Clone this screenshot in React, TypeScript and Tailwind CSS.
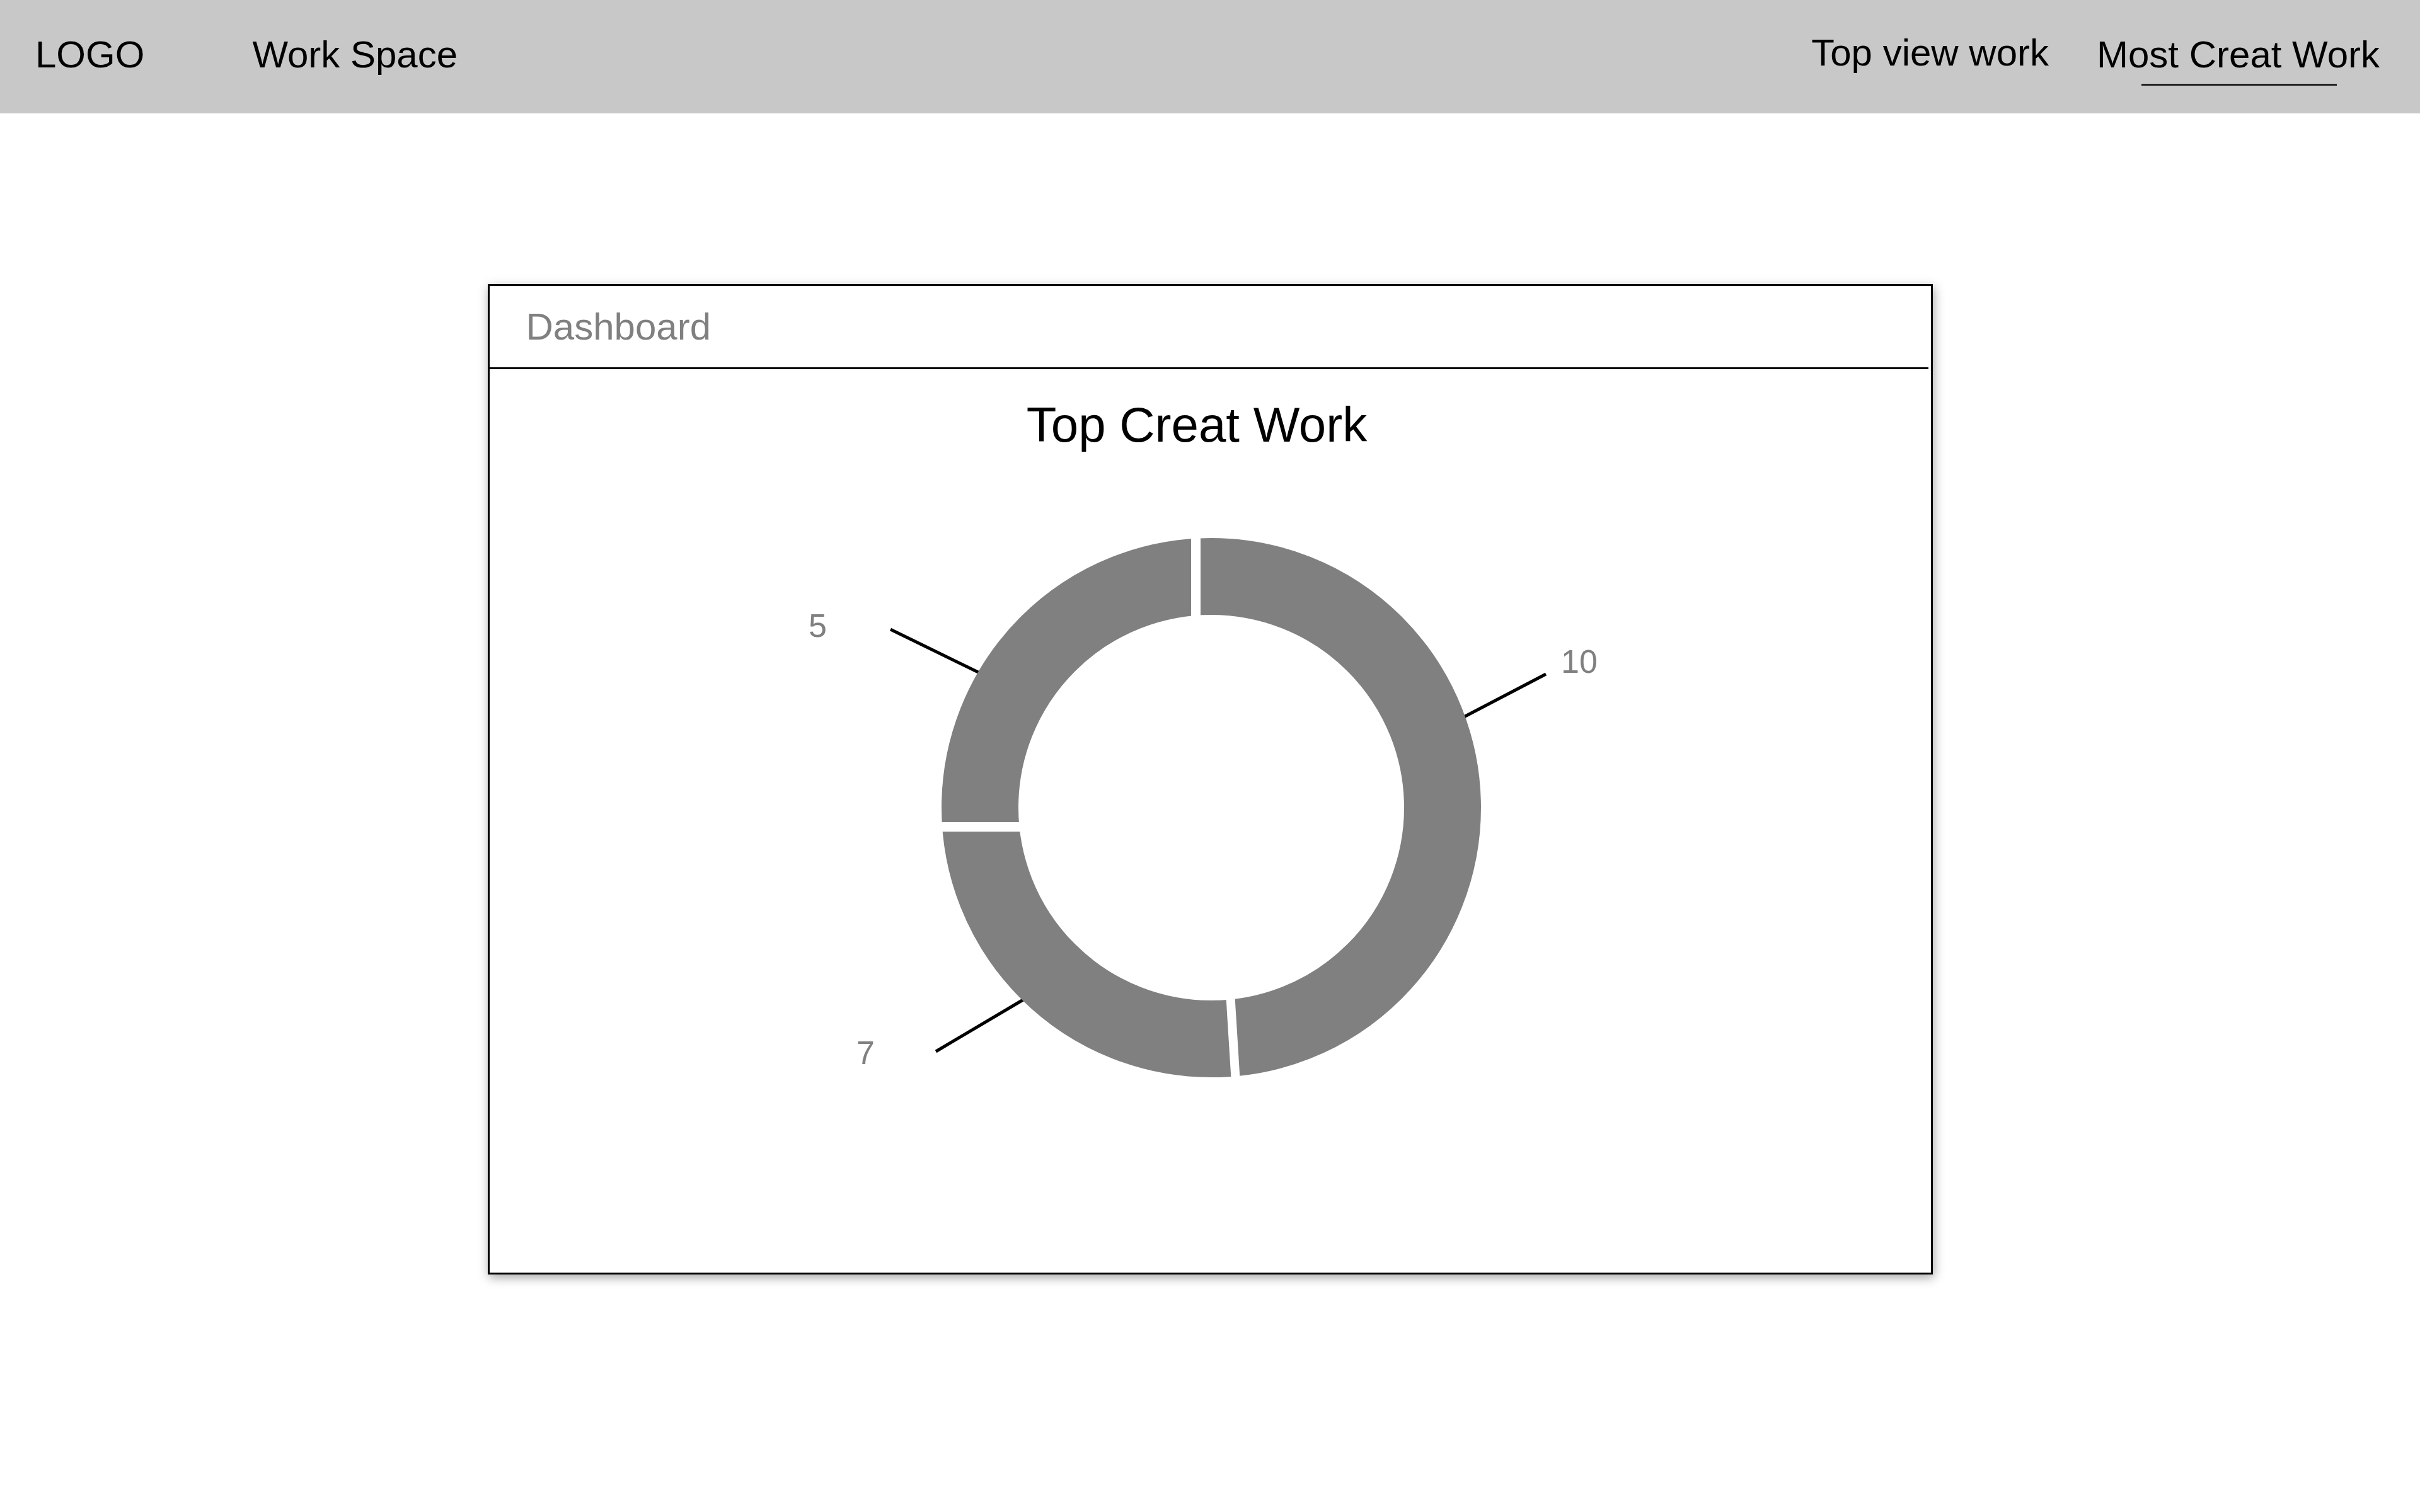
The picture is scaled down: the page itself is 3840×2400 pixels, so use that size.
import React from "react";

const navLinks = ["Top view work", "Most Creat Work"];

// leader lines for the donut labels, in page coordinates
const leaders = [
  { label: "5", x1: 1413, y1: 999, x2: 1585, y2: 1083, tx: 1283, ty: 1011 },
  { label: "10", x1: 2453, y1: 1070, x2: 2298, y2: 1151, tx: 2477, ty: 1068 },
  { label: "7", x1: 1485, y1: 1669, x2: 1642, y2: 1576, tx: 1359, ty: 1689 },
];

const DonutChart = () => (
  <svg className="block w-full h-[1307px]" viewBox="777 713 2287 1307">
    {leaders.map((l) => (
      <line key={l.label} x1={l.x1} y1={l.y1} x2={l.x2} y2={l.y2} stroke="#000" strokeWidth={5} />
    ))}
    <circle cx={1922} cy={1282} r={367} fill="none" stroke="#808080" strokeWidth={122} />
    {/* segment gaps */}
    <line x1={1897.5} y1={840} x2={1897.5} y2={990} stroke="#fff" strokeWidth={15} />
    <line x1={1480} y1={1312.5} x2={1630} y2={1312.5} stroke="#fff" strokeWidth={15} />
    <line x1={1952} y1={1575} x2={1961} y2={1720} stroke="#fff" strokeWidth={14} />
    {leaders.map((l) => (
      <text
        key={l.label}
        x={l.tx}
        y={l.ty}
        fill="#808080"
        fontSize={52}
        fontFamily="'Liberation Sans', Arial, sans-serif"
      >
        {l.label}
      </text>
    ))}
  </svg>
);

export default function App() {
  return (
    <div className="h-[2400px] bg-white font-['Liberation_Sans',Arial,sans-serif] text-black">
      <header className="h-[180px] bg-[#c8c8c8] flex items-start text-[60px] leading-[60px]">
        <div className="pl-[56px] pt-[57px]">LOGO</div>
        <div className="ml-[171px] pt-[57px]">Work Space</div>
        <nav className="ml-auto flex gap-[76px] pr-[64px]">
          <a className="pt-[54px]">{navLinks[0]}</a>
          <a className="relative pt-[57px]">
            {navLinks[1]}
            <span className="absolute left-[71px] top-[133px] w-[310px] h-[3px] bg-[#222]" />
          </a>
        </nav>
      </header>

      <main className="pt-[271px]">
        <section className="mx-auto w-[2293px] h-[1572px] border-[3px] border-black bg-white shadow-[2px_5px_16px_rgba(0,0,0,0.35)]">
          <div className="h-[129px] pl-[58px] pt-[35px] text-[60px] leading-[60px] text-[#808080]">
            Dashboard
          </div>
          <div className="h-[3px] bg-black mr-[4px]" />
          <h2 className="mt-[49px] text-center pr-[42px] text-[78px] leading-[78px]">Top Creat Work</h2>
          <DonutChart />
        </section>
      </main>
    </div>
  );
}
